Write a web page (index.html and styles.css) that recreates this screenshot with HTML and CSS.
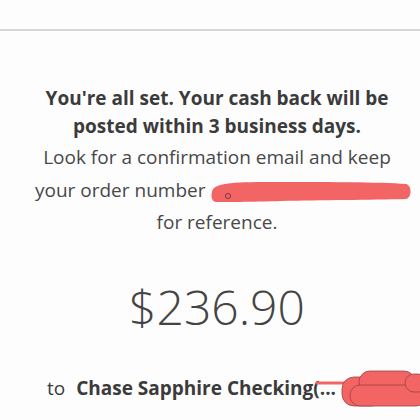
FILE: index.html
```html
<!DOCTYPE html>
<html>
<head>
<meta charset="utf-8">
<link rel="stylesheet" href="styles.css">
</head>
<body>
<div class="page">
  <div class="topbar"></div>
  <div class="content">
    <p class="headline">You're all set. Your cash back will be<br>posted within 3 business days.</p>
    <p class="body">Look for a confirmation email and keep<br>your order number <span class="redact-wrap"><svg class="redact" width="200" height="20" viewBox="0 0 200 20"><path d="M1 10 C2 1, 20 0, 60 0 C110 0, 170 0, 195 2 C201 3, 201 16, 195 17 C160 18, 110 18, 70 19 C40 20, 12 20, 5 20 C0 19, 0 13, 1 10 Z" fill="#f36464"/><circle cx="17" cy="14" r="2.6" fill="none" stroke="#7a3a3a" stroke-width="1"/></svg></span><br>for reference.</p>
    <div class="amount">$236.90</div>
    <div class="dest">to <b>Chase Sapphire Checking</b><span class="redact-tail"><span class="paren">(...</span><svg class="scribble" width="110" height="40" viewBox="0 0 110 40"><path d="M2 14 L36 14" stroke="#f36464" stroke-width="3" stroke-linecap="round"/><g fill="#f36464" stroke="#9a4444" stroke-width="0.8"><rect x="27" y="8" width="42" height="29" rx="12"/><rect x="44" y="2" width="56" height="22" rx="11"/><rect x="35" y="16" width="76" height="21" rx="10"/><rect x="90" y="5" width="22" height="18" rx="9"/></g></svg></span></div>
  </div>
</div>
</body>
</html>
```
FILE: styles.css
```css
html, body {
  margin: 0;
  padding: 0;
  background: #fdfdfd;
}
.page {
  width: 420px;
  height: 420px;
  overflow: hidden;
  font-family: "Open Sans", "Noto Sans", sans-serif;
  color: #3b3b3b;
}
.topbar {
  height: 29px;
  border-bottom: 2px solid #d6d6d6;
}
.content {
  padding: 53px 21px 0 35px;
  text-align: center;
}
.headline {
  margin: 0;
  font-weight: 700;
  font-size: 19px;
  line-height: 28px;
}
.body {
  margin: 1px 0 0;
  font-size: 19px;
  line-height: 32.5px;
  color: #484848;
  white-space: nowrap;
}
.redact-wrap {
  display: inline-block;
  width: 200px;
  height: 20px;
  vertical-align: -5px;
  margin-left: 1px;
}
.redact { display: block; }
.amount {
  margin-top: 38px;
  font-size: 48px;
  font-weight: 300;
  line-height: 60px;
  color: #444;
}
.dest {
  margin-top: 36px;
  margin-left: -35px;
  font-size: 19px;
  line-height: 30px;
  white-space: nowrap;
  text-align: left;
  padding-left: 47px;
}
.dest b { margin-left: 6px; font-weight: 700; }
.redact-tail { position: relative; }
.paren { font-weight: 700; }
.scribble {
  position: absolute;
  left: 2px;
  top: -6px;
}
```
